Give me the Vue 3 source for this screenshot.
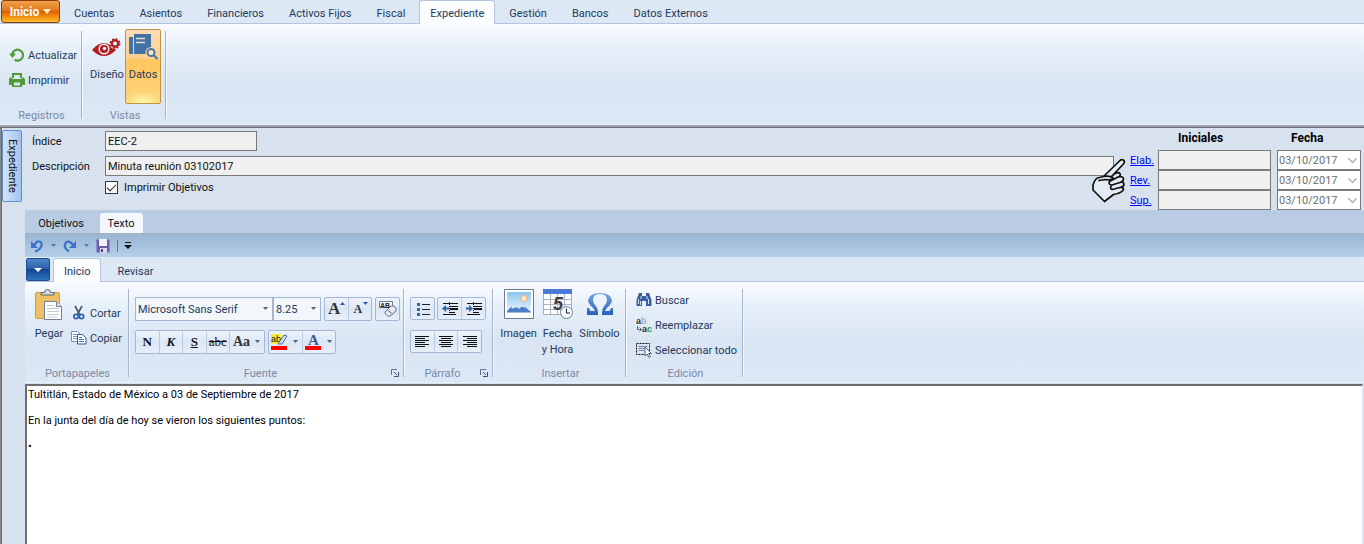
<script setup>
import { ref } from 'vue'

const mainTabs = ['Cuentas', 'Asientos', 'Financieros', 'Activos Fijos', 'Fiscal', 'Expediente', 'Gestión', 'Bancos', 'Datos Externos']
const activeTab = ref('Expediente')
const indice = ref('EEC-2')
const descripcion = ref('Minuta reunión 03102017')
const imprimir = ref(true)
const signers = [
  { id: 'elab', label: 'Elab.', date: '03/10/2017' },
  { id: 'rev', label: 'Rev.', date: '03/10/2017' },
  { id: 'sup', label: 'Sup.', date: '03/10/2017' }
]
const texto = ref('Tultitlán, Estado de México a 03 de Septiembre de 2017\n\nEn la junta del día de hoy se vieron los siguientes puntos:\n\n•')
const aligns = [
  { name: 'Izquierda', lines: [[0, 14], [0, 10], [0, 14], [0, 10], [0, 14], [0, 10]] },
  { name: 'Centro', lines: [[0, 14], [2, 10], [0, 14], [2, 10], [0, 14], [2, 10]] },
  { name: 'Derecha', lines: [[0, 14], [4, 10], [0, 14], [4, 10], [0, 14], [4, 10]] }
]
</script>

<template>
  <div class="app">
    <nav class="main-tabs">
      <button class="start">Inicio <svg width="8" height="5" viewBox="0 0 8 5"><path d="M0 0h8L4 5z" fill="#fff0c8" /></svg></button>
      <button v-for="t in mainTabs" :key="t" class="tab" :class="{ active: t === activeTab }" @click="activeTab = t">{{ t }}</button>
    </nav>

    <section class="ribbon">
      <div class="group g-reg">
        <div class="body rows">
          <button class="small">
            <svg width="16" height="16" viewBox="0 0 16 16"><path d="M3.200 7a5.500 5.500 0 1 1 2.400 5.800" fill="none" stroke="#4f9a35" stroke-width="2.200" /><path d="M0 6.500h7L3.500 11z" fill="#4f9a35" /></svg>
            Actualizar
          </button>
          <button class="small">
            <svg width="16" height="16" viewBox="0 0 16 16" fill="#4f9a35"><path d="M3 1h10v5h-2V3H5v3H3zM1.500 5.500H3V7h10V5.500h1.500L16 7v6h-3v2H3v-2H0V7zM5 10.500v3h6v-3z" fill-rule="evenodd" /></svg>
            Imprimir
          </button>
        </div>
        <div class="caption">Registros</div>
      </div>
      <div class="group g-vis">
        <div class="body views">
          <button class="big">
            <svg width="30" height="32" viewBox="0 0 30 32">
              <path d="M0 20Q12 6 24 20Q12 32 0 20z" fill="#b41d20" />
              <circle cx="12" cy="19" r="4.800" fill="#b41d20" stroke="#eaf1fa" stroke-width="1.500" />
              <circle cx="12.500" cy="18.500" r="1.800" fill="#e8edf6" />
              <circle cx="23" cy="13.500" r="5.500" fill="#e8eff9" />
              <circle cx="23" cy="13.500" r="3.200" fill="none" stroke="#b41d20" stroke-width="2.200" />
              <circle cx="23" cy="13.500" r="4.500" fill="none" stroke="#b41d20" stroke-width="1.800" stroke-dasharray="2 1.530" />
            </svg>
            <span>Diseño</span>
          </button>
          <button class="big pressed">
            <svg width="30" height="32" viewBox="0 0 30 32">
              <path d="M1 7h4v17H2l-1-1zM6 4h17v20H6z" fill="#4272a8" />
              <path d="M8 8.500h9M8 12.500h9" stroke="#ecdcc5" stroke-width="1.500" />
              <circle cx="23" cy="22.500" r="5.600" fill="#fbd59a" />
              <circle cx="23" cy="22.500" r="3.500" fill="#fbe2b6" stroke="#4272a8" stroke-width="1.900" />
              <path d="M25.500 25l4 4" stroke="#4272a8" stroke-width="2.200" />
            </svg>
            <span>Datos</span>
          </button>
        </div>
        <div class="caption">Vistas</div>
      </div>
    </section>

    <main class="workspace">
      <aside class="rail"><button class="side-tab">Expediente</button></aside>
      <div class="pane">
        <form class="record" @submit.prevent>
          <div class="fields">
            <label for="indice">Índice</label>
            <input id="indice" v-model="indice" class="box short" type="text" readonly />
            <label for="desc">Descripción</label>
            <input id="desc" v-model="descripcion" class="box" type="text" readonly />
            <div class="check">
              <input id="impr" v-model="imprimir" type="checkbox" />
              <label for="impr">Imprimir Objetivos</label>
            </div>
          </div>
          <div class="signoff">
            <b class="h-ini">Iniciales</b><b class="h-fecha">Fecha</b>
            <template v-for="s in signers" :key="s.id">
              <a href="#" @click.prevent>{{ s.label }}</a>
              <input class="box" type="text" :aria-label="'Iniciales ' + s.label" readonly />
              <div class="picker">
                <select disabled :aria-label="'Fecha ' + s.label"><option>{{ s.date }}</option></select>
                <svg width="9" height="6" viewBox="0 0 9 6"><path d="M.5.5l4 4 4-4" fill="none" stroke="#a5a5a5" stroke-width="1.200" /></svg>
              </div>
            </template>
            <svg class="hand" width="34" height="44" viewBox="0 0 34 44">
              <path d="M11.500 17.500L28 1.500Q30-.5 32 1.500Q33 3.500 31 5.500L21 16Q26 11.500 28 14.500L28 18Q32 18 31.500 21.500Q33 24 31.500 27Q32 31 28 34L21.500 36L12.500 42.500L1 31V26Q3 20 5.500 19z" fill="#e4ebf3" />
              <path d="M11.500 17.500L28 1.500Q30-.5 32 1.500Q33 3.500 31 5.500L20 17M20 17Q25.500 12 28 14.500Q29 17 26 18L17.500 22.500M26 18Q31 16.500 31.500 20Q31.500 22.500 28 23.500L20 26M28 23.500Q32 22.500 32 25.500Q31.500 28 28 28.500L20 30.500M29 28.500Q32.500 28.500 31 31.500Q28 34.500 21.500 35.500L12.500 42.500L1 31V26Q3 20 5.500 19L11.500 17.500Q18 16.500 21 19Q21 21.500 13.500 20.500L7 21.500M17.500 22.500Q16 25.500 20 26Q17 29 20 30.500" fill="none" stroke="#111" stroke-width="1.700" stroke-linejoin="round" stroke-linecap="round" />
            </svg>
          </div>
        </form>

        <nav class="doc-tabs">
          <button class="doc-tab">Objetivos</button>
          <button class="doc-tab active">Texto</button>
        </nav>

        <div class="qat">
          <button aria-label="Deshacer"><svg width="14" height="14" viewBox="0 0 14 14"><path d="M4 7Q6 2 9.500 2.500Q13 4 11 8Q9.500 11 5 12.500" fill="none" stroke="#3a72cc" stroke-width="2.200" /><path d="M1 2v7h7z" fill="#3a72cc" /></svg></button>
          <button aria-label="Opciones de deshacer"><svg width="7" height="4" viewBox="0 0 7 4"><path d="M1 0h5L3.500 3z" fill="#4a78ae" /></svg></button>
          <button aria-label="Rehacer"><svg width="14" height="14" viewBox="0 0 14 14"><path d="M10 6Q7 1.500 3.500 3Q0 7 3.500 10.500L6 12.500" fill="none" stroke="#3a72cc" stroke-width="2.200" /><path d="M13 2v7H6z" fill="#3a72cc" /></svg></button>
          <button aria-label="Opciones de rehacer"><svg width="7" height="4" viewBox="0 0 7 4"><path d="M1 0h5L3.500 3z" fill="#4a78ae" /></svg></button>
          <button aria-label="Guardar"><svg width="14" height="14" viewBox="0 0 14 14"><path d="M.5.5h13v13H.5z" fill="#6c5fb0" /><path d="M3 0h8v7H3z" fill="#f2f4fa" /><path d="M4 9h7v5H4z" fill="#d8dcec" /><path d="M5 10h2v3H5z" fill="#4a3f8c" /></svg></button>
          <i></i>
          <button aria-label="Personalizar"><svg width="8" height="7" viewBox="0 0 8 7"><path d="M1 0h6v1H1zM0 3h8L4 7z" fill="#111" /></svg></button>
        </div>

        <nav class="edit-tabs">
          <button class="menu" aria-label="Menú"><svg width="8" height="4" viewBox="0 0 8 4"><path d="M0 0h8L4 4z" fill="#fff" /></svg></button>
          <button class="tab active">Inicio</button>
          <button class="tab">Revisar</button>
        </nav>

        <section class="ribbon">
          <div class="group g-port">
            <div class="body clip">
              <button class="big">
                <svg width="30" height="32" viewBox="0 0 30 32">
                  <rect x="1.500" y="3.500" width="24" height="26" rx="1.500" fill="#efc063" stroke="#cf9c42" />
                  <path d="M7 6V3.500h3.500Q10.500.5 13.500.5t3 3H20V6z" fill="#d7d9dc" stroke="#5d6470" />
                  <path d="M10.500 12.500h12l5 5v13h-17z" fill="#fff" stroke="#71809a" />
                  <path d="M22.500 12.500v5h5" fill="#dde3ee" stroke="#71809a" />
                  <path d="M13 16.500h7M13 19.500h12M13 22.500h12M13 25.500h12M13 28h10" stroke="#c3cad6" />
                </svg>
                <span>Pegar</span>
              </button>
              <div class="rows">
                <button class="small">
                  <svg width="16" height="16" viewBox="0 0 16 16"><path d="M4 1l5 9M11 1L6 10" stroke="#4c586b" stroke-width="1.700" /><circle cx="5" cy="11.500" r="2.200" fill="none" stroke="#2a61b4" stroke-width="1.700" /><circle cx="10.500" cy="11.500" r="2.200" fill="none" stroke="#2a61b4" stroke-width="1.700" /></svg>
                  Cortar
                </button>
                <button class="small">
                  <svg width="16" height="16" viewBox="0 0 16 16"><path d="M.5 1.500h6l3 3v7h-9z" fill="#fff" stroke="#6f8fc0" /><path d="M2 4.500h4M2 6.500h4M2 8.500h4" stroke="#6d94d0" /><path d="M6.500 4.500h5l3.500 3.500v6H6.500z" fill="#fff" stroke="#2c57a8" /><path d="M8 7.500h3M8 9.500h5M8 11.500h5" stroke="#467ac8" /></svg>
                  Copiar
                </button>
              </div>
            </div>
            <div class="caption">Portapapeles</div>
          </div>

          <div class="group g-font">
            <div class="body toolrows">
              <div class="line">
                <div class="combo face">
                  <select aria-label="Fuente"><option>Microsoft Sans Serif</option></select>
                  <svg class="arr" width="7" height="4" viewBox="0 0 7 4"><path d="M1 0h5L3.500 3z" fill="#4a5f80" /></svg>
                </div>
                <div class="combo size">
                  <select aria-label="Tamaño"><option>8.25</option></select>
                  <svg class="arr" width="7" height="4" viewBox="0 0 7 4"><path d="M1 0h5L3.500 3z" fill="#4a5f80" /></svg>
                </div>
                <div class="bar sizes">
                  <button aria-label="Aumentar"><b class="grow">A</b><svg class="mark" width="5" height="4" viewBox="0 0 5 4"><path d="M0 3h5L2.500 0z" fill="#2f56a8" /></svg></button>
                  <button aria-label="Reducir"><b class="shrink">A</b><svg class="mark" width="5" height="4" viewBox="0 0 5 4"><path d="M0 0h5L2.500 3z" fill="#2f56a8" /></svg></button>
                </div>
                <div class="bar clear">
                  <button aria-label="Borrar formato"><svg width="18" height="18" viewBox="0 0 18 18"><path d="M.5 1.500h13v6H.5z" fill="#f4f6fa" stroke="#707988" /><text x="1" y="8" font-family="Liberation Sans" font-size="7" font-weight="bold" fill="#222">AB</text><path d="M6 12l6-6q2-1 4 1t1 4l-5 4.500q-2 1.500-4 0t-2-3.500z" fill="#e3eaf5" stroke="#60708c" /><path d="M8.500 10l5 4" stroke="#60708c" /></svg></button>
                </div>
              </div>
              <div class="line">
                <div class="bar styles">
                  <button><b class="heavy">N</b></button>
                  <button><b><em>K</em></b></button>
                  <button><b><u>S</u></b></button>
                  <button><s>abc</s></button>
                  <button class="wide"><b class="case">Aa</b><svg width="7" height="4" viewBox="0 0 7 4"><path d="M1 0h5L3.500 3z" fill="#4a5f80" /></svg></button>
                </div>
                <div class="bar colors">
                  <button aria-label="Resaltar"><svg width="17" height="18" viewBox="0 0 17 18"><path d="M0 1h10v10H0z" fill="#f6ee3c" /><text x="0" y="9" font-family="Liberation Sans" font-size="9" fill="#111">ab</text><path d="M7 11l6-9 3 1-5 8z" fill="#d4deee" stroke="#53688e" /><path d="M0 13h16v4H0z" fill="#f00" /></svg><svg width="7" height="4" viewBox="0 0 7 4"><path d="M1 0h5L3.500 3z" fill="#4a5f80" /></svg></button>
                  <button aria-label="Color de fuente"><svg width="17" height="18" viewBox="0 0 17 18"><text x="3" y="12" font-family="Liberation Serif" font-size="15" font-weight="bold" fill="#3a5c98">A</text><path d="M0 13h16v4H0z" fill="#f00" /></svg><svg width="7" height="4" viewBox="0 0 7 4"><path d="M1 0h5L3.500 3z" fill="#4a5f80" /></svg></button>
                </div>
              </div>
            </div>
            <div class="caption">Fuente</div>
            <button class="launch" aria-label="Más opciones de fuente"><svg width="8" height="8" viewBox="0 0 8 8"><path d="M.5 6V.5H6" fill="none" stroke="#5b6f90" /><path d="M3 3l3 3M7.500 3v4.500H3" fill="none" stroke="#3d5072" /></svg></button>
          </div>

          <div class="group g-par">
            <div class="body toolrows">
              <div class="line">
                <div class="bar one">
                  <button aria-label="Viñetas"><svg width="14" height="14" viewBox="0 0 14 14"><path d="M6 2.500h8M6 7.500h8M6 12.500h8" stroke="#222" /><path d="M1 1h3v3H1zM1 6h3v3H1zM1 11h3v3H1z" fill="#3862ae" /></svg></button>
                </div>
                <div class="bar two">
                  <button aria-label="Reducir sangría"><svg width="16" height="14" viewBox="0 0 16 14"><path d="M1 1.500h15M8 4.500h8M8 10.500h5M1 12.500h13" stroke="#111" /><path d="M8 6h8v2H8z" fill="#111" /><path d="M7.500 0v14" stroke="#111" stroke-dasharray="1 1" /><path d="M0 6.500L4 3v2.500h3v2H4V10z" fill="#3862ae" /></svg></button>
                  <button aria-label="Aumentar sangría"><svg width="16" height="14" viewBox="0 0 16 14"><path d="M1 1.500h15M8 4.500h8M8 10.500h5M1 12.500h13" stroke="#111" /><path d="M8 6h8v2H8z" fill="#111" /><path d="M7.500 0v14" stroke="#111" stroke-dasharray="1 1" /><path d="M7 6.500L3 3v2.500H0v2h3V10z" fill="#3862ae" /></svg></button>
                </div>
              </div>
              <div class="line">
                <div class="bar three">
                  <button v-for="a in aligns" :key="a.name" :aria-label="a.name">
                    <svg width="14" height="12" viewBox="0 0 14 12"><rect v-for="(l, i) in a.lines" :key="i" :x="l[0]" :y="i * 2" :width="l[1]" height="1" fill="#111" /></svg>
                  </button>
                </div>
              </div>
            </div>
            <div class="caption">Párrafo</div>
            <button class="launch" aria-label="Más opciones de párrafo"><svg width="8" height="8" viewBox="0 0 8 8"><path d="M.5 6V.5H6" fill="none" stroke="#5b6f90" /><path d="M3 3l3 3M7.500 3v4.500H3" fill="none" stroke="#3d5072" /></svg></button>
          </div>

          <div class="group g-ins">
            <div class="body inserts">
              <button class="big">
                <svg width="30" height="32" viewBox="0 0 30 32">
                  <defs><linearGradient id="sky" x1="0" y1="0" x2="0" y2="1"><stop offset="0" stop-color="#8fc3ee" /><stop offset="1" stop-color="#e8f5fd" /></linearGradient></defs>
                  <path d="M.5.5h29v29H.5z" fill="#fff" stroke="#6c7a90" /><path d="M3 3h24v20H3z" fill="url(#sky)" />
                  <circle cx="20" cy="9.500" r="3" fill="#fde9c0" stroke="#eeb078" />
                  <path d="M3 23v-1l7-7 5 5 4-4 8 7z" fill="#4b7fc6" /><path d="M7 18l3-3 3 3-2 1-1-1-1 2zM17 18l2-2 3 3-3-1z" fill="#e8f1fb" /><path d="M3 23h24v1H3z" fill="#9fbde0" />
                </svg>
                <span>Imagen</span>
              </button>
              <button class="big">
                <svg width="30" height="32" viewBox="0 0 30 32">
                  <path d="M.5.5h28v25H.5z" fill="#fff" stroke="#a4adbf" /><path d="M0 0h29v5H0z" fill="#4b79d8" /><path d="M1 10.500h27M1 15.500h27M1 20.500h27M7.500 5v20M14.500 5v20M21.500 5v20" stroke="#aab2c2" />
                  <text x="10" y="21" font-family="Liberation Sans" font-size="18" font-weight="bold" font-style="italic" fill="#3e4045">5</text>
                  <circle cx="23.500" cy="23.500" r="6" fill="#f4f7fc" stroke="#717d91" /><path d="M23.500 19.500v4.500h3.500" fill="none" stroke="#222" />
                </svg>
                <span>Fecha<br />y Hora</span>
              </button>
              <button class="big">
                <svg width="30" height="32" viewBox="0 0 30 32">
                  <defs><linearGradient id="om" x1="0" y1="0" x2="0" y2="1"><stop offset="0" stop-color="#74a7dd" /><stop offset="1" stop-color="#2960b8" /></linearGradient></defs>
                  <path d="M2 19h2q.5 3 2 3h4q-1-3-4-5Q3 14 3 11.500Q4 4 15 4t12 7.500q0 2.500-3 5.500-3 2-4 5h4q1.500 0 2-3h2v7h-11v-3q0-4 3-7 2-2 2-5 0-6-7-6t-7 6q0 3 2 5 3 3 3 7v3H2z" fill="url(#om)" />
                </svg>
                <span>Símbolo</span>
              </button>
            </div>
            <div class="caption">Insertar</div>
          </div>

          <div class="group g-edit">
            <div class="body rows">
              <button class="small">
                <svg width="16" height="16" viewBox="0 0 16 16"><path d="M3 1h3v3h4V1h3l2.500 7v6H10V9H6v5H.5V8z" fill="#365f9e" /><path d="M2.500 7v5M4.500 9v4M5 4v3M11 4v3M12.500 7v5" stroke="#d7e3f5" /></svg>
                Buscar
              </button>
              <button class="small">
                <svg width="16" height="16" viewBox="0 0 16 16" font-family="Liberation Sans" font-weight="bold" font-size="9"><text x="0" y="7" fill="#333">a</text><text x="5" y="7" fill="#a6adb8">b</text><text x="6" y="15" fill="#333">a</text><text x="11" y="15" fill="#1f9a32">c</text><path d="M1.500 9v3.500H5M3.500 10.500l2 2-2 2" fill="none" stroke="#3f6397" /></svg>
                Reemplazar
              </button>
              <button class="small">
                <svg width="16" height="16" viewBox="0 0 16 16"><path d="M.5 1.500h13v11H.5z" fill="none" stroke="#111" stroke-dasharray="2 1" /><path d="M2.500 4.500h9M2.500 6.500h6M2.500 8.500h6" stroke="#7285a3" /><path d="M9 5v9l2-2 2 3.500 1.500-1-2-3h3z" fill="#fff" stroke="#52627c" /></svg>
                Seleccionar todo
              </button>
            </div>
            <div class="caption">Edición</div>
          </div>
        </section>

        <textarea v-model="texto" class="editor" aria-label="Texto" spellcheck="false"></textarea>
      </div>
    </main>
  </div>
</template>

<style>
html, body { background: #d8e2ee; }
</style>

<style scoped>
* { box-sizing: border-box; }
.app { min-height: 100vh; display: flex; flex-direction: column; font: 11px/14px Roboto, "Liberation Sans", sans-serif; color: #1e395b; background: #d8e2ee; }
button, input, select, textarea { font: inherit; color: inherit; margin: 0; border-radius: 0; }
button { border: 0; padding: 0; background: none; white-space: nowrap; }
svg { display: block; flex: none; }

.main-tabs, .edit-tabs { display: flex; height: 24px; background: #dde8f5; border-bottom: 1px solid #b4c4dc; }
.main-tabs { padding-left: 1px; }
.edit-tabs { height: 25px; padding: 1px 0 0 1px; }
.start { width: 59px; height: 23px; margin-right: 3px; display: flex; align-items: center; justify-content: center; gap: 4px; border: 1px solid #8d3b08; border-radius: 3px; background: linear-gradient(#f0a04c, #e47a1c 45%, #dd5f02 50%, #f59a16 80%, #fcc032); color: #fff; font-weight: bold; font-size: 12px; }
.tab { height: 24px; padding: 2px 10px 0; margin-right: 3px; border: 1px solid transparent; border-bottom: 0; border-radius: 3px 3px 0 0; }
.edit-tabs .tab { margin-right: 5px; }
.tab.active { background: #fbfdff; border-color: #b4c4dc; }

.ribbon { display: flex; height: 101px; border-bottom: 1px solid #e9f0f9; background: linear-gradient(#f8fbfe, #e6f0fa 25%, #dae5f3 58%, #dce8f6); }
.group { position: relative; flex: none; background: linear-gradient(90deg, #a5b4cc 50%, #f4f8fd 50%) right 7px / 2px 88px no-repeat; }
.body { height: 85px; }
.caption { text-align: center; color: #7a8aa5; }
.rows { display: flex; flex-direction: column; }
.small { height: 25px; display: flex; align-items: center; gap: 3px; }
.small svg { margin-bottom: 2px; }
.big { display: flex; flex-direction: column; align-items: center; line-height: 16px; }
.big span { margin-top: 5px; }
.g-reg { width: 83px; }
.g-reg .rows { padding: 19px 0 0 9px; }
.g-vis { width: 84px; }
.views { display: flex; padding: 5px 0 0 6px; }
.views .big { width: 36px; height: 75px; padding-top: 1px; }
.views .pressed { padding-top: 0; border: 1px solid #c0933f; border-radius: 2px; background: radial-gradient(ellipse 18px 12px at 50% 100%, #fffbb0, #ffe68500), linear-gradient(#fbdcb5, #fbd190 38%, #fec65e 42%, #fed67c); }

.workspace { flex: 1; display: flex; border-top: 2px solid #98a3b5; border-left: 1px solid #8a8a8a; box-shadow: inset 1px 1px #6b6b6b; padding: 1px 0 0 1px; }
.rail { width: 23px; flex: none; padding-top: 2px; }
.side-tab { width: 20px; height: 72px; writing-mode: vertical-rl; border: 1px solid #5b8fd0; border-radius: 2px; background: linear-gradient(90deg, #d3e4fa, #a3c4ee); color: #111; }
.pane { flex: 1; min-width: 0; display: flex; flex-direction: column; }
.record { height: 82px; display: flex; color: #111; }
.fields { flex: 1; display: grid; grid-template-columns: 73px 1fr; grid-template-rows: 20px 20px 13px; row-gap: 5px; padding: 3px 0 0 7px; align-items: center; }
.fields > label, .signoff a { padding-top: 2px; }
.box { width: 100%; height: 20px; border: 1px solid #7a7a7a; background: #f0f0f0; padding: 0 2px; outline: 0; min-width: 0; }
.short { width: 152px; }
.check { grid-column: 2; display: flex; align-items: center; gap: 6px; height: 11px; }
.check input { appearance: none; width: 13px; height: 13px; border: 1px solid #333; background: #fff; display: grid; place-items: center; }
.check input:checked::after { content: ""; width: 8px; height: 4px; border: solid #222; border-width: 0 0 1px 1px; transform: translateY(-1px) rotate(-45deg); }
.signoff { position: relative; width: 250px; flex: none; padding: 2px 3px 0 16px; display: grid; grid-template-columns: 28px 113px 90px; grid-template-rows: 20px 20px 20px 20px; align-items: center; }
.signoff b { font-size: 12px; line-height: 16px; color: #000; align-self: start; }
.h-ini { grid-column: 2; padding-left: 20px; }
.h-fecha { padding-left: 20px; }
.signoff a { color: #00f; }
.picker { position: relative; margin-left: 6px; height: 20px; }
.picker select { appearance: none; width: 100%; height: 20px; border: 1px solid #7a7a7a; background: #fff; color: #6d6d6d; padding: 1px 1px 0; opacity: 1; }
.picker svg { position: absolute; right: 4px; top: 8px; }
.hand { position: absolute; left: -22px; top: 31px; }

.doc-tabs { display: flex; height: 24px; padding: 3px 0 0; background: #bacce4; border-bottom: 1px solid #a9b4c2; color: #111; }
.doc-tab { height: 20px; width: 75px; padding: 1px 3px 0 0; }
.doc-tab.active { width: 43px; padding-right: 1px; background: #f3f8fe; border-radius: 3px 3px 0 0; }
.qat { display: flex; align-items: center; height: 23px; padding-left: 5px; gap: 6px; background: linear-gradient(#98b5d2, #b6cfe8); }
.qat i { width: 1px; height: 12px; background: #5f7592; margin: 0 0 0 1px; }
.menu { width: 24px; height: 23px; margin-right: 3px; display: grid; place-items: center; border: 1px solid #1c4a8c; border-radius: 2px; background: linear-gradient(#4f86c6, #2a62ae 45%, #144390 50%, #2f74bd); }

.g-port { width: 105px; }
.clip { display: flex; padding: 7px 0 0 9px; }
.clip .big { width: 30px; }
.clip .rows { padding: 12px 0 0 7px; }
.g-font { width: 275px; }
.toolrows { padding: 15px 0 0 5px; }
.line { display: flex; height: 33px; }
.combo { position: relative; height: 24px; }
.combo select { appearance: none; width: 100%; height: 24px; border: 1px solid #a3b6d3; background: #f3f7fc; padding: 1px 2px 0; }
.combo .arr { position: absolute; right: 4px; top: 10px; }
.face { width: 138px; }
.size { width: 48px; margin-right: 3px; }
.bar { display: flex; height: 24px; border: 1px solid #a3b6d3; border-radius: 2px; background: linear-gradient(#edf3fb, #dce7f5 50%, #e6eef9); }
.bar button { position: relative; flex: 1; display: flex; align-items: center; justify-content: center; gap: 4px; color: #111; }
.bar button + button { border-left: 1px solid #bccbe0; }
.bar b, .bar s { font-family: "Liberation Serif", serif; font-size: 13px; line-height: 18px; }
.bar .heavy { font-weight: 900; }
.bar .grow { font-size: 17px; padding-right: 4px; color: #333; }
.bar .shrink { font-size: 12px; padding-right: 4px; color: #333; }
.mark { position: absolute; right: 3px; top: 4px; }
.sizes { width: 48px; margin-right: 3px; }
.clear { width: 25px; }
.styles { width: 130px; margin-right: 3px; }
.styles .wide { flex: 0 0 35px; }
.bar .case { font-size: 14px; color: #333; }
.colors { width: 68px; }
.launch { position: absolute; right: 6px; bottom: 5px; }
.g-par { width: 89px; }
.g-par .bar { height: 23px; }
.g-par .one { width: 25px; margin-right: 2px; }
.two { width: 49px; }
.three { width: 72px; }
.g-par .caption, .g-font .caption { padding-right: 14px; }
.g-ins { width: 133px; }
.inserts { display: flex; padding: 7px 0 0 5px; }
.inserts .big { width: 39px; }
.inserts .big:last-child { width: 45px; }
.g-edit { width: 117px; }
.g-edit .rows { padding: 6px 0 0 9px; }

.editor { flex: 1; margin: 1px 1px 0 0; min-height: 160px; resize: none; outline: 0; border: 2px solid #6d6d6d; border-width: 2px 1px 0 2px; border-right-color: #dfe5ec; background: #fff; color: #000; padding: 2px 1px; line-height: 13px; display: block; }
</style>
